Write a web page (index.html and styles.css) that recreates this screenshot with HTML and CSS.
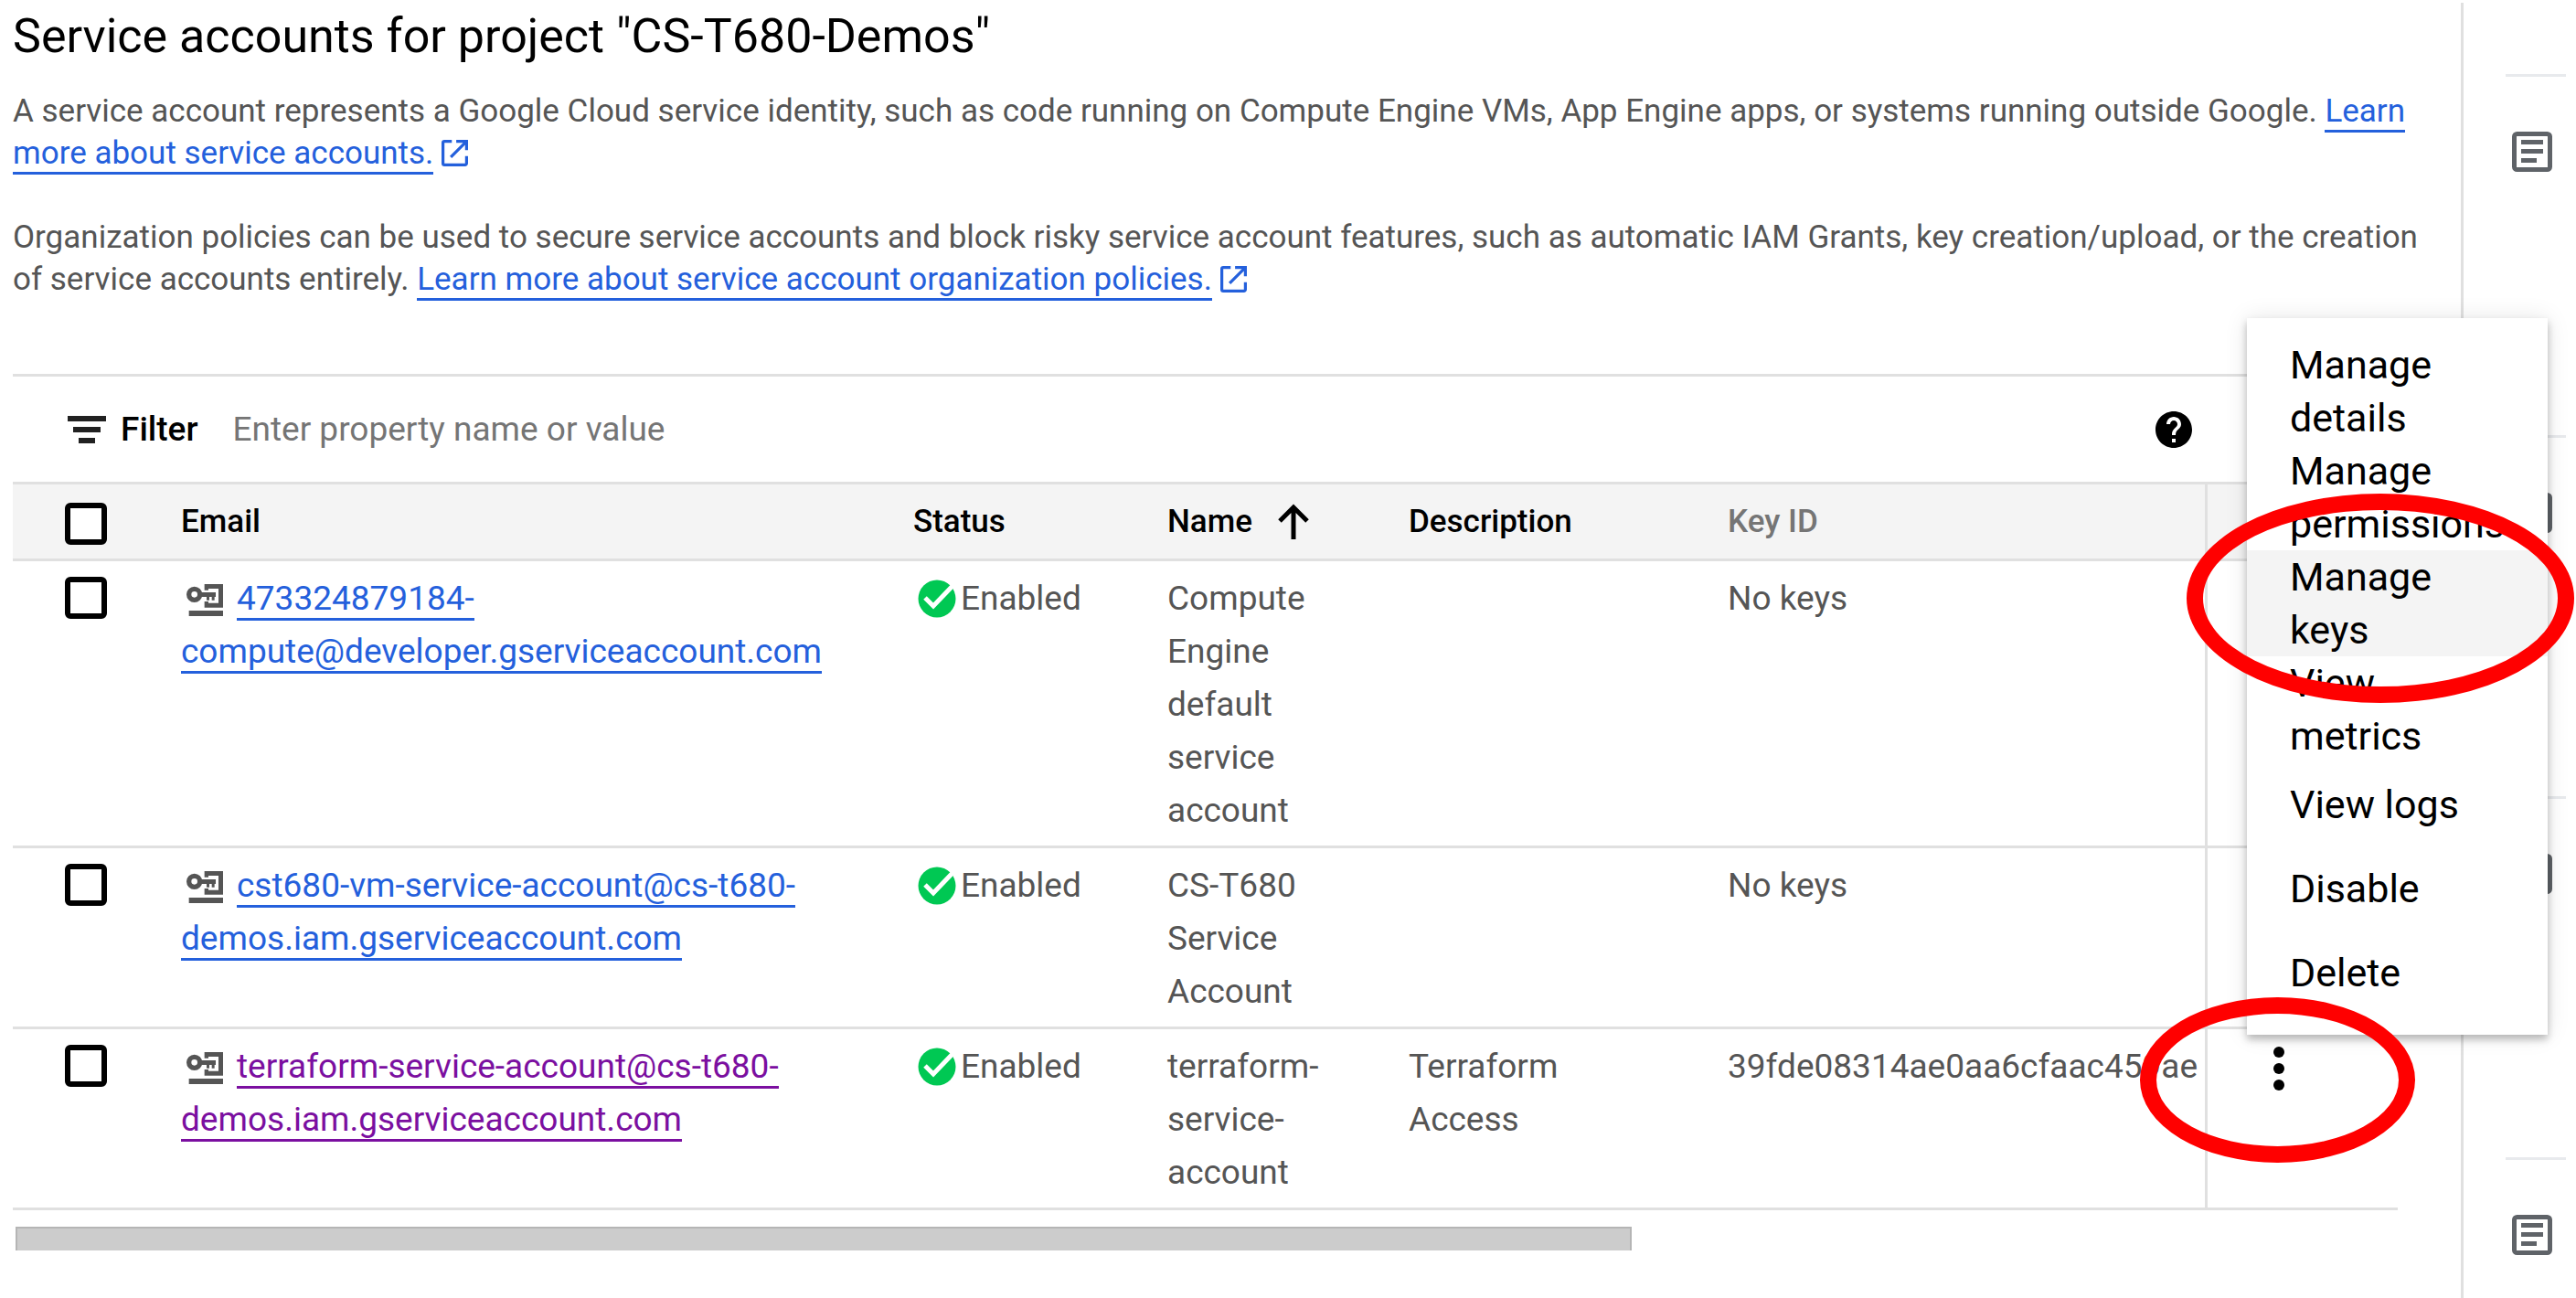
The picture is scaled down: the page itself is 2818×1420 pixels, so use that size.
FILE: index.html
```html
<!DOCTYPE html>
<html lang="en">
<head>
<meta charset="utf-8">
<title>Service accounts</title>
<link rel="stylesheet" href="styles.css">
</head>
<body>
<svg class="sprite" aria-hidden="true">
  <symbol id="icon-key" viewBox="0 0 120 105">
    <path fill="#555" d="M59 0h61v77H59V57h13v5h33V15H72v5H59zM8 87h112v18H8zM44 27h52v15h-4v11h-9V42h-8v11h-9V42H44z"/>
    <circle cx="26" cy="34" r="18" fill="none" stroke="#555" stroke-width="16"/>
  </symbol>
  <symbol id="icon-check" viewBox="0 0 42 42">
    <circle cx="21" cy="21" r="20.500" fill="#00c853"/>
    <path d="M8 20l9 9L39 6" fill="none" stroke="#fff" stroke-width="5"/>
  </symbol>
  <symbol id="icon-external" viewBox="3 3 18 18">
    <path fill="#2460dc" d="M19 19H5V5h5V3H5a2 2 0 0 0-2 2v14a2 2 0 0 0 2 2h14c1.100 0 2-.9 2-2v-5h-2v5zM13 3v2h4.590l-9 9 1.410 1.410 9-9V10h2V3h-8z"/>
  </symbol>
  <symbol id="icon-doc" viewBox="0 0 44 44">
    <rect x="2.500" y="2.500" width="39" height="39" rx="3" fill="none" stroke="#5f6368" stroke-width="5"/>
    <path fill="#5f6368" d="M10 9h24v5H10zM10 19h24v5H10zM10 29h17v5H10z"/>
  </symbol>
</svg>
<div class="page">
  <main class="main">
    <h1 class="title">Service accounts for project "CS-T680-Demos"</h1>
    <p class="intro">A service account represents a Google Cloud service identity, such as code running on Compute Engine VMs, App Engine apps, or systems running outside Google. <a class="link" href="#accounts">Learn more about service accounts.</a> <svg class="external"><use href="#icon-external"/></svg></p>
    <p class="intro">Organization policies can be used to secure service accounts and block risky service account features, such as automatic IAM Grants, key creation/upload, or the creation of service accounts entirely. <a class="link" href="#policies">Learn more about service account organization policies.</a> <svg class="external"><use href="#icon-external"/></svg></p>

    <section class="accounts">
      <div class="filter">
        <svg class="filter-icon" viewBox="0 0 42 30"><path fill="#212121" d="M0 0h42v6H0zM6 12h30v6H6zM12 24h18v6H12z"/></svg>
        <label class="filter-label" for="filter">Filter</label>
        <input class="filter-input" id="filter" type="text" placeholder="Enter property name or value">
        <button class="help" type="button" aria-label="Help"><svg viewBox="2 2 20 20"><path d="M12 2C6.480 2 2 6.480 2 12s4.480 10 10 10 10-4.480 10-10S17.520 2 12 2zm1 17h-2v-2h2v2zm2.070-7.750l-.9.920C13.450 12.900 13 13.500 13 15h-2v-.5c0-1.100.45-2.100 1.170-2.830l1.240-1.260c.37-.36.59-.86.59-1.410 0-1.100-.9-2-2-2s-2 .9-2 2H8c0-2.210 1.790-4 4-4s4 1.790 4 4c0 .88-.36 1.680-.93 2.250z"/></svg></button>
      </div>
      <table class="table">
        <colgroup><col class="col-check"><col class="col-email"><col class="col-status"><col class="col-name"><col class="col-description"><col class="col-key"><col class="col-actions"></colgroup>
        <thead>
          <tr>
            <th class="check"><input class="box" type="checkbox" aria-label="Select all"></th>
            <th>Email</th>
            <th>Status</th>
            <th>Name<svg class="sort" viewBox="0 0 34 39"><path d="M17 39V5M2 19L17 4l15 15" fill="none" stroke="#000" stroke-width="5"/></svg></th>
            <th>Description</th>
            <th class="muted">Key ID</th>
            <th class="actions"></th>
          </tr>
        </thead>
        <tbody>
          <tr>
            <td class="check"><input class="box" type="checkbox" aria-label="Select compute account"></td>
            <td><svg class="key"><use href="#icon-key"/></svg><a class="link" href="#compute">473324879184-<wbr>compute@developer.gserviceaccount.com</a></td>
            <td><span class="status"><svg class="tick"><use href="#icon-check"/></svg>Enabled</span></td>
            <td>Compute Engine default service account</td>
            <td></td>
            <td>No keys</td>
            <td class="actions"></td>
          </tr>
          <tr>
            <td class="check"><input class="box" type="checkbox" aria-label="Select CS-T680 account"></td>
            <td><svg class="key"><use href="#icon-key"/></svg><a class="link" href="#cst680">cst680-vm-service-account@cs-t680-<wbr>demos.iam.gserviceaccount.com</a></td>
            <td><span class="status"><svg class="tick"><use href="#icon-check"/></svg>Enabled</span></td>
            <td>CS-T680 Service Account</td>
            <td></td>
            <td>No keys</td>
            <td class="actions"></td>
          </tr>
          <tr>
            <td class="check"><input class="box" type="checkbox" aria-label="Select Terraform account"></td>
            <td><svg class="key"><use href="#icon-key"/></svg><a class="link visited" href="#terraform">terraform-service-account@cs-t680-<wbr>demos.iam.gserviceaccount.com</a></td>
            <td><span class="status"><svg class="tick"><use href="#icon-check"/></svg>Enabled</span></td>
            <td>terraform-service-account</td>
            <td>Terraform Access</td>
            <td>39fde08314ae0aa6cfaac459ae</td>
            <td class="actions">
              <button class="more" type="button" aria-label="Actions"><svg viewBox="0 0 12 48"><circle cx="6" cy="6" r="6"/><circle cx="6" cy="24" r="6"/><circle cx="6" cy="42" r="6"/></svg></button>
              <div class="menu">
                <button class="item" type="button">Manage details</button>
                <button class="item" type="button">Manage permissions</button>
                <button class="item active" type="button">Manage keys</button>
                <button class="item" type="button">View metrics</button>
                <button class="item" type="button">View logs</button>
                <button class="item" type="button">Disable</button>
                <button class="item" type="button">Delete</button>
                <div class="ring ring-keys"></div>
              </div>
              <div class="ring ring-more"></div>
            </td>
          </tr>
        </tbody>
      </table>
      <div class="scrollbar"></div>
    </section>
  </main>
  <aside class="panel">
    <div class="note"><svg class="doc"><use href="#icon-doc"/></svg></div>
    <div class="note"><svg class="doc"><use href="#icon-doc"/></svg></div>
    <div class="note"><svg class="doc"><use href="#icon-doc"/></svg></div>
    <div class="note"><svg class="doc"><use href="#icon-doc"/></svg></div>
  </aside>
</div>
</body>
</html>
```
FILE: styles.css
```css
* { box-sizing: border-box; }

body {
  margin: 0;
  background: #fff;
  color: #000;
  font: 37px/58px Roboto, "Liberation Sans", sans-serif;
}

.sprite { display: none; }

svg { overflow: visible; }

button {
  padding: 0;
  border: 0;
  background: none;
  font: inherit;
  color: inherit;
}

.page {
  display: grid;
  grid-template-columns: 1fr 126px;
  min-height: 100vh;
  overflow: hidden;
}

.main { padding: 10px 40px 0 14px; }

.title {
  margin: 0 0 29px;
  font-size: 52px;
  line-height: 60px;
  font-weight: 400;
}

.intro {
  margin: 0 0 46px;
  font-size: 35px;
  line-height: 46px;
  color: #555;
}

.link {
  color: #2460dc;
  text-decoration: none;
  border-bottom: 3px solid #2460dc;
}

.visited {
  color: #7b0fa0;
  border-color: #7b0fa0;
}

.external {
  width: 29px;
  height: 29px;
  vertical-align: -3px;
}

.accounts {
  margin: 80px 29px 0 0;
  border-top: 3px solid #e0e0e0;
}

.filter {
  display: flex;
  align-items: center;
  height: 115px;
  padding: 0 225px 0 60px;
}

.filter-icon {
  width: 42px;
  height: 30px;
  margin-right: 16px;
}

.filter-label { font-weight: 500; }

.filter-input {
  flex: 1;
  margin-left: 38px;
  padding: 0;
  border: 0;
  outline: 0;
  background: none;
  font: inherit;
}

.filter-input::placeholder { color: #757575; }

.help, .help svg {
  display: block;
  width: 40px;
  height: 40px;
}

.table {
  width: 100%;
  table-layout: fixed;
  border-collapse: separate;
  border-spacing: 0;
}

.col-check { width: 184px; }
.col-email { width: 801px; }
.col-status { width: 278px; }
.col-name { width: 264px; }
.col-description { width: 349px; }
.col-actions { width: 211px; }

th, td {
  padding: 12px 0 9px;
  border-bottom: 3px solid #e0e0e0;
  vertical-align: top;
  text-align: left;
}

th {
  height: 87px;
  background: #f4f4f4;
  border-top: 3px solid #e0e0e0;
  font-size: 35px;
  font-weight: 500;
}

td { color: #555; }

.muted { color: #757575; }

td:nth-child(4), td:nth-child(5) { padding-right: 80px; }

.check { padding: 17px 0 0 57px; }

th.check { padding-top: 20px; }

.box {
  appearance: none;
  display: block;
  width: 46px;
  height: 46px;
  margin: 0;
  border: 6px solid #000;
  border-radius: 6px;
  background: #fff;
}

.sort {
  width: 34px;
  height: 39px;
  margin-left: 28px;
  vertical-align: -8px;
}

.key {
  width: 40px;
  height: 35px;
  margin: 0 15px 0 6px;
  vertical-align: -7px;
}

.status {
  display: flex;
  align-items: center;
  gap: 5px;
  padding-left: 5px;
}

.tick {
  width: 42px;
  height: 42px;
}

.actions {
  position: relative;
  border-left: 3px solid #e0e0e0;
}

.more {
  display: block;
  margin: 7px 0 0 72px;
}

.more svg {
  display: block;
  width: 12px;
  height: 48px;
}

.menu {
  position: absolute;
  z-index: 1;
  left: 43px;
  bottom: 189px;
  width: 329px;
  padding: 22px 0;
  background: #fff;
  box-shadow: 0 5px 8px rgba(0, 0, 0, .25), 0 0 24px rgba(0, 0, 0, .1);
}

.item {
  display: flex;
  align-items: center;
  width: 100%;
  min-height: 92px;
  padding: 0 47px;
  font-size: 43px;
  line-height: 58px;
  text-align: left;
  color: #000;
}

.active { background: #f4f4f4; }

.ring {
  position: absolute;
  z-index: 2;
  border: 18px solid #f00;
  border-radius: 50%;
  pointer-events: none;
}

.ring-keys {
  top: 192px;
  left: -66px;
  width: 424px;
  height: 229px;
}

.ring-more {
  top: -35px;
  left: -74px;
  width: 301px;
  height: 181px;
}

.scrollbar {
  width: 1768px;
  max-width: 100%;
  height: 26px;
  margin: 18px 0 0 3px;
  border: 2px solid #b5b5b5;
  border-bottom: 0;
  background: #ccc;
}

.panel {
  margin-top: 3px;
  padding: 78px 11px 0 46px;
  border-left: 3px solid #e0e0e0;
}

.note {
  height: 395px;
  padding: 60px 7px;
  border-top: 3px solid #e8eaed;
}

.note:last-child { height: 152px; }

.doc {
  display: block;
  width: 44px;
  height: 44px;
}
```
